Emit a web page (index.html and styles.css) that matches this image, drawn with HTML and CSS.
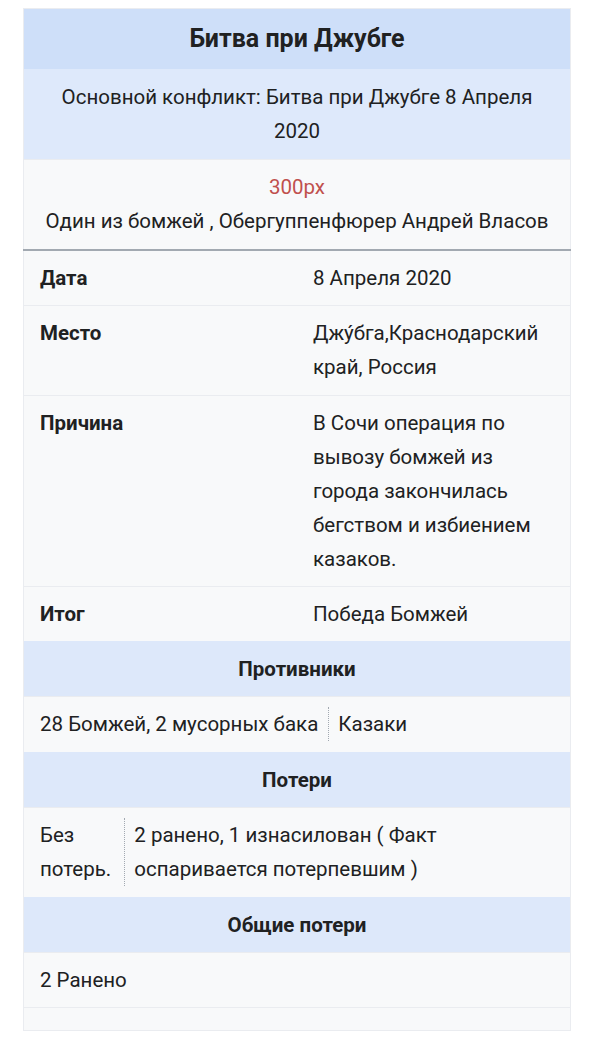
FILE: index.html
```html
<!DOCTYPE html>
<html lang="ru">
<head>
<meta charset="utf-8">
<title>Битва при Джубге</title>
<link rel="stylesheet" href="styles.css">
</head>
<body>
<div class="page">
  <table class="infobox">
    <colgroup><col class="col-half"><col class="col-half"></colgroup>
    <tbody>
      <tr><th colspan="2" class="title">Битва при Джубге</th></tr>
      <tr><td colspan="2" class="subtitle">Основной конфликт: Битва при Джубге 8 Апреля 2020</td></tr>
      <tr class="image-row"><td colspan="2" class="image-cell"><span class="redlink">300px</span><br>Один из бомжей , Обергуппенфюрер Андрей Власов</td></tr>
      <tr class="data"><th class="label">Дата</th><td class="value">8 Апреля 2020</td></tr>
      <tr class="data"><th class="label">Место</th><td class="value tall">Джу́бга,Краснодарский край, Россия</td></tr>
      <tr class="data"><th class="label">Причина</th><td class="value">В Сочи операция по вывозу бомжей из города закончилась бегством и избиением казаков.</td></tr>
      <tr class="data"><th class="label">Итог</th><td class="value">Победа Бомжей</td></tr>
      <tr><th colspan="2" class="section">Противники</th></tr>
      <tr class="data"><td colspan="2" class="split-cell">
        <div class="split">
          <div class="side side-first nowrap">28 Бомжей, 2 мусорных бака</div>
          <div class="side side-second">Казаки</div>
        </div>
      </td></tr>
      <tr><th colspan="2" class="section">Потери</th></tr>
      <tr class="data"><td colspan="2" class="split-cell">
        <div class="split">
          <div class="side side-first narrow">Без потерь.</div>
          <div class="side side-second">2 ранено, 1 изнасилован ( Факт оспаривается потерпевшим )</div>
        </div>
      </td></tr>
      <tr><th colspan="2" class="section">Общие потери</th></tr>
      <tr class="data"><td colspan="2" class="full">2 Ранено</td></tr>
      <tr class="data"><td colspan="2" class="empty"></td></tr>
    </tbody>
  </table>
</div>
</body>
</html>
```
FILE: styles.css
```css
html, body {
  margin: 0;
  padding: 0;
  background: #ffffff;
}

body {
  font-family: Roboto, "Noto Sans", "Liberation Sans", sans-serif;
  color: #202122;
  font-size: 20.5px;
  line-height: 34px;
}

.page {
  padding: 8px 19px 0 23px;
}

.infobox {
  width: 100%;
  table-layout: fixed;
  border-collapse: collapse;
  border: 1px solid #eaecf0;
  background: #f8f9fa;
}

.col-half {
  width: 50%;
}

.infobox th,
.infobox td {
  padding: 10px 16px;
  vertical-align: top;
  text-align: left;
}

.infobox tr + tr > * {
  border-top: 1px solid #eaecf0;
}

.title {
  background: #cedff9;
  font-size: 25px;
  font-weight: 700;
  text-align: center !important;
  padding: 13px 16px !important;
}

.infobox tr + tr > .subtitle {
  border-top: none;
}

.subtitle {
  background: #dee9fb;
  text-align: center !important;
  padding: 11px 16px !important;
}

.image-cell {
  text-align: center !important;
  padding: 10px 16px 11px !important;
  border-bottom: 2px solid #a2a9b1;
}

.redlink {
  color: #c0504d;
}

.label {
  font-weight: 700;
}

.value.tall {
  padding-bottom: 11px;
}

.section {
  background: #dde8fa;
  font-weight: 700;
  text-align: center !important;
  padding: 11px 16px 10px !important;
}

.infobox tr + tr > .section {
  border-top: none;
}

.split-cell {
  padding: 10px 16px 11px !important;
}

.split {
  display: flex;
  align-items: stretch;
}

.side-first {
  flex: none;
  padding-right: 10px;
}

.side-first.nowrap {
  white-space: nowrap;
}

.side-first.narrow {
  width: min-content;
  padding-right: 13px;
}

.side-second {
  flex: 1;
  border-left: 1px dotted #a2a9b1;
  padding-left: 9px;
}

.empty {
  height: 0;
  padding: 11px 16px !important;
}
```
